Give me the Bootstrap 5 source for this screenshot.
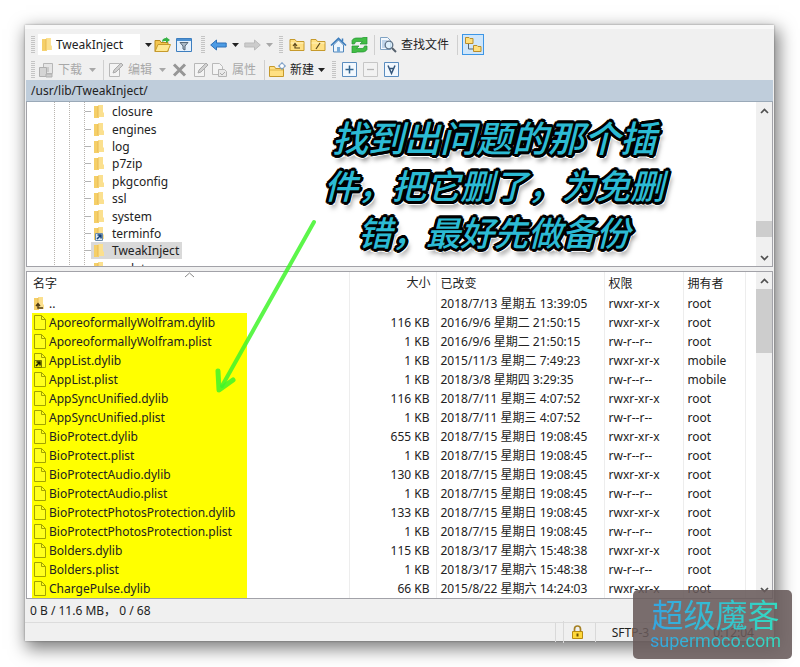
<!DOCTYPE html>
<html lang="zh-CN">
<head>
<meta charset="utf-8">
<meta name="viewport" content="width=device-width, initial-scale=1">
<title>TweakInject</title>
<link rel="stylesheet" href="https://cdn.jsdelivr.net/npm/bootstrap@5.3.0/dist/css/bootstrap.min.css">
<style>
body{font:12px/19px "Noto Sans","Noto Sans CJK SC",sans-serif;color:#222;background:#fff;min-height:100vh}
.page{padding:25px 26px 26px 25px;min-height:100vh}
.app{background:#f0f0f0;box-shadow:3px 6px 16px 2px rgba(0,0,0,.5),0 0 2px rgba(0,0,0,.35)}
.app button{font-size:12px;line-height:18px;color:#222;background:none;border:0;padding:0;white-space:nowrap}
.app button:disabled{color:#a8a8a8}
.bars{padding:5px 0 0 3px;border-top:4px solid #f8f8f8}
.toolrow{height:25px}
.toolrow-top{height:21px}
.tool{width:21px;height:21px;display:inline-flex;align-items:center;justify-content:center}
.drop{width:13px;height:21px;display:inline-flex;align-items:center;justify-content:center}
.grip{width:10px;height:18px;background:repeating-linear-gradient(#c4c4c4 0 1px,transparent 1px 2px) center/4px 100% no-repeat}
.sep{width:9px;height:20px;background:linear-gradient(#cfcfcf,#cfcfcf) center/1px 100% no-repeat}
.combo{width:114px;height:21px;background:linear-gradient(90deg,#fff 102px,transparent 102px)}
.combo select{appearance:none;border:0;background:none;font:12px/19px "Noto Sans",sans-serif;color:#222;padding:0;width:86px}
.app .toggled{width:22px;height:21px;border:1px solid #3c96e6;background:#cfe6fa}
.path{height:22px;background:#bfcddb;border-bottom:1px solid #9aa9b8;padding-left:5px;line-height:21px;margin:0 1px}
.pane{background:#fff;border:1px solid #a2a2a8;margin:0 1px}
.tree{height:165px;border-top:0}
.nodes{height:175px;padding-top:1px;overflow:hidden;
 background:repeating-linear-gradient(#b9b5b0 0 1px,transparent 1px 2px) 27px 0/1px 100% no-repeat,
 repeating-linear-gradient(#b9b5b0 0 1px,transparent 1px 2px) 42px 0/1px 100% no-repeat,
 repeating-linear-gradient(#b9b5b0 0 1px,transparent 1px 2px) 57px 0/1px 100% no-repeat}
.node{flex:1 1 0;min-height:0;padding-left:58px;font-size:12px;line-height:17px}
.node::before{content:"";width:6px;height:1px;background:#b4b4b4}
.node a{color:#222;text-decoration:none;display:flex;align-items:center;height:17px;padding:0 3px 0 3px}
.node a svg{margin-right:8px}
.node a.current{background:#d9d9d9}
.scroller{width:16px;background:#f0f0f0}
.app .scroller button{height:17px;display:flex;align-items:center;justify-content:center}
.thumb{background:#cdcdcd}
.list{height:328px;margin-top:4px}
.files{table-layout:fixed;line-height:19px;width:100%;white-space:nowrap}
.files th,.files td{padding:0 0 0 4px;border-right:1px solid #ededed;overflow:hidden;font-weight:400;height:19px}
.files th{height:22px;line-height:20px;padding-top:1px}
.files th.first-col{padding-left:6px}
.files .size{text-align:right;padding:0 6px 0 0}
.files th.size{padding-right:5px}
.files td:last-child,.files th:last-child{border:0}
.files td:first-child{padding-left:5px}
.files .label{display:flex;align-items:center;width:215px;padding-left:2px;gap:3px}
.files .hit{background:#ff0}
.files td svg{flex:none}
.totals{height:24px;line-height:24px;padding-left:5px;word-break:keep-all;border-bottom:1px solid #dcdcdc}
.session{height:18px}
.cell{border-left:1px solid #d9d9d9}
.caption{top:113px;left:287px;width:414px;color:#2cbbd4;font:italic 500 34px/47px "Noto Sans CJK SC",sans-serif;text-align:center;
 text-shadow:2px 0 #000,-2px 0 #000,0 2px #000,0 -2px #000,2px 2px #000,-2px 2px #000,2px -2px #000,-2px -2px #000,
 3px 0 #000,-3px 0 #000,0 3px #000,0 -3px #000,3px 1px #000,-3px 1px #000,1px 3px #000,1px -3px #000,
 4px 0 #fff,-4px 0 #fff,0 4px #fff,0 -4px #fff,3px 3px #fff,-3px 3px #fff,3px -3px #fff,-3px -3px #fff,3px 6px 5px #777}
.caption .first{font-size:36px}
.pointer{left:210px;top:215px}
.sorted{left:184px;top:272px}
.stamp{right:8px;bottom:8px;width:159px;height:69px;border-radius:5px;background:rgba(104,90,90,.88);text-align:center;padding:5px 0 0 6px}
.stamp span{display:block;background:linear-gradient(90deg,#35a0e4,#34dfbd);background-clip:text;-webkit-background-clip:text;color:transparent}
.stamp .brand{font:400 32px/36px "Noto Sans CJK SC",sans-serif}
.stamp .site{font:18px/19px Roboto,sans-serif}
</style>
<script src="https://cdn.jsdelivr.net/npm/bootstrap@5.3.0/dist/js/bootstrap.bundle.min.js"></script>
</head>
<body>
<svg class="d-none" xmlns="http://www.w3.org/2000/svg">
<symbol id="dir" viewBox="0 0 10 13"><path d="M0 1h5v12H0z" fill="#f5cf68"/><path d="M4 0h5v7l1 1v4H4z" fill="#fbe08f"/><path d="M4 1v11" stroke="#e9b950" fill="none"/></symbol>
<symbol id="doc" viewBox="0 0 12 15"><path d="M.5.5h7l4 4v10H.5z" fill="#ffff3a" fill-opacity=".5" stroke="#a3a300"/><path d="M7.500.5v4h4" fill="none" stroke="#a3a300"/></symbol>
<symbol id="link" viewBox="0 0 8 8"><path d="M.5.5h7v7h-7z" fill="#dceaf6" stroke="#6e8da8"/><path d="M2 6l3.500-3.500M2.500 2H6v3.500" stroke="#123f78" stroke-width="1.500" fill="none"/></symbol>
<symbol id="down" viewBox="0 0 7 4"><path d="M0 0h7L3.500 4z" fill="currentColor"/></symbol>
<symbol id="chev" viewBox="0 0 9 6"><path d="M1 5l3.500-3.500L8 5" fill="none" stroke="#505050" stroke-width="1.700"/></symbol>
<symbol id="fold" viewBox="0 0 16 14"><path d="M1 12.500v-11h5l1.500 2H15v9z" fill="#ffe083" stroke="#c69a2c"/><path d="M1.500 5h13" stroke="#fff3c0"/></symbol>
<symbol id="edit" viewBox="0 0 16 16"><path d="M1.500 1.500h10v13h-10z" fill="#f4f4f4" stroke="#b8b8b8"/><path d="M5 11l1-3 7-7 2 2-7 7z" fill="#d0d0d0" stroke="#aaa"/></symbol>
</svg>
<div class="page position-relative">
<main class="app position-relative">
 <div class="bars">
  <div class="toolrow-top d-flex align-items-center">
   <span class="grip"></span>
   <label class="combo d-flex align-items-center ps-1"><svg width="10" height="13" class="me-1"><use href="#dir"/></svg><select aria-label="目录"><option>TweakInject</option></select><svg class="ms-1" width="7" height="4"><use href="#down"/></svg></label>
   <button class="tool" aria-label="打开目录"><svg width="17" height="16" viewBox="0 0 17 16"><path d="M1 14.500v-11h5l1 2h7v9z" fill="#f4c64f" stroke="#b98a1e"/><path d="M1 14.500l3-7h12.500l-3 7z" fill="#ffe891" stroke="#c69a2c"/><path d="M8 5c0-3 2-4 4-4V0l4 3-4 3V4c-2 0-3 0-4 1z" fill="#35b344"/></svg></button>
   <button class="tool" aria-label="筛选"><svg width="16" height="14" viewBox="0 0 16 14"><path d="M.5.5h15v13H.5z" fill="#e6f1fc" stroke="#3d7ebf"/><path d="M1 1h14v2H1z" fill="#4d91d2"/><path d="M4 4.500h8L9 8v4l-2-1V8z" fill="#abb9c6" stroke="#56697b"/></svg></button>
   <span class="grip ms-1"></span>
   <button class="tool" aria-label="后退"><svg width="17" height="12" viewBox="0 0 17 12"><path d="M.7 6L6.500 1v3h9.700v4H6.500v3z" fill="#4c9be4" stroke="#2f71b8"/></svg></button>
   <button class="drop" aria-label="后退历史"><svg width="7" height="4"><use href="#down"/></svg></button>
   <button class="tool" aria-label="前进" disabled><svg width="17" height="12" viewBox="0 0 17 12"><path d="M16.300 6L10.500 1v3H.8v4h9.700v3z" fill="#ccc" stroke="#bbb"/></svg></button>
   <button class="drop" aria-label="前进历史" disabled><svg width="7" height="4"><use href="#down"/></svg></button>
   <span class="grip"></span>
   <button class="tool" aria-label="上级目录"><svg width="16" height="14" viewBox="0 0 16 14"><use href="#fold"/><path d="M11 10H6V6M4 8l2-2.500L8 8" fill="none" stroke="#5b471b" stroke-width="1.200"/></svg></button>
   <button class="tool" aria-label="根目录"><svg width="16" height="14" viewBox="0 0 16 14"><use href="#fold"/><path d="M6 11l4-6" fill="none" stroke="#5b471b" stroke-width="1.200"/></svg></button>
   <button class="tool" aria-label="主目录"><svg width="17" height="16" viewBox="0 0 17 16"><path d="M3.500 8v7h10V8l-5-5z" fill="#eef6fd" stroke="#4e86bc"/><path d="M1 8.500l7.500-7 7.500 7" fill="none" stroke="#3c7dbd" stroke-width="1.700"/><path d="M7 10h3v5H7z" fill="#75a9d8"/><path d="M12.500 1.500v3" stroke="#3c7dbd" stroke-width="1.500"/></svg></button>
   <button class="tool" aria-label="刷新"><svg width="17" height="16" viewBox="0 0 17 16"><path d="M1 7V3.500C2 1.500 4 1 6 1h5l2-1h3v7H9l2.500-2.500H6C4.500 4.500 4 5.500 3.500 7z" fill="#42bd45" stroke="#239334" stroke-width=".7"/><path d="M16 9v3.500c-1 2-3 2.500-5 2.500H6l-2 1H1V9h7l-2.500 2.500H11c1.500 0 2-1 2.500-2.500z" fill="#42bd45" stroke="#239334" stroke-width=".7"/></svg></button>
   <span class="sep"></span>
   <button class="d-flex align-items-center gap-1"><svg width="18" height="17" viewBox="0 0 18 17"><path d="M1.500 1.500h7l3 3v9h-10z" fill="#f3f8fd" stroke="#7fa2c3"/><path d="M3 5h5M3 7h3M3 9h3M3 11h3" stroke="#8db2d7"/><circle cx="10" cy="9" r="3.800" fill="#d8edfb" fill-opacity=".8" stroke="#5e7186" stroke-width="1.300"/><path d="M13 12l4 4" stroke="#55606c" stroke-width="2"/></svg>查找文件</button>
   <span class="sep ms-1"></span>
   <button class="toggled d-flex align-items-center justify-content-center" aria-label="目录树" aria-pressed="true"><svg width="18" height="17" viewBox="0 0 18 17"><path d="M1.500 1.500H5l1 1h3v5H1.500zM9.500 9.500H13l1 1h3v5H9.500z" fill="#ffdf7c" stroke="#b98d2c"/><path d="M4.500 8v5H9" stroke="#55646f" fill="none"/></svg></button>
  </div>
  <div class="toolrow d-flex align-items-center pt-1">
   <span class="grip"></span>
   <button class="d-flex align-items-center gap-1" disabled><svg width="16" height="16" viewBox="0 0 16 16"><path d="M5.500 1.500h9v10h-9z" fill="#e5e5e5" stroke="#b7b7b7"/><path d="M1.500 5.500h7v9h-7z" fill="#d4d4d4" stroke="#afafaf"/><path d="M10 5v5M8 12h6v3H8z" stroke="#b0b0b0" fill="#ccc"/></svg>下载</button>
   <button class="drop ms-1" aria-label="下载选项" disabled><svg width="7" height="4"><use href="#down"/></svg></button>
   <span class="sep"></span>
   <button class="d-flex align-items-center gap-1" disabled><svg width="16" height="16"><use href="#edit"/></svg>编辑</button>
   <button class="drop ms-1" aria-label="编辑选项" disabled><svg width="7" height="4"><use href="#down"/></svg></button>
   <button class="tool" aria-label="删除" disabled><svg width="15" height="14" viewBox="0 0 15 14"><path d="M2 1.500l11 11M13 1.500l-11 11" stroke="#969696" stroke-width="3"/></svg></button>
   <button class="tool" aria-label="重命名" disabled><svg width="16" height="16"><use href="#edit"/></svg></button>
   <button class="d-flex align-items-center gap-1" disabled><svg width="17" height="16" viewBox="0 0 17 16"><path d="M1.500 1.500h7l3 3v8h-10z" fill="#f4f4f4" stroke="#b9b9b9"/><path d="M7.500 7.500h6l2 2v5h-8z" fill="#e8e8e8" stroke="#b5b5b5"/><path d="M9 11l2 2 3-3" stroke="#aaa" fill="none"/></svg>属性</button>
   <span class="sep ms-1"></span>
   <button class="d-flex align-items-center gap-1"><svg width="17" height="16" viewBox="0 0 17 16"><path d="M.5 14.500v-10h5l1 2h8v8z" fill="#ffe083" stroke="#c69a2c"/><path d="M1 8h13" stroke="#e0b549"/><circle cx="13" cy="4" r="2.500" fill="#fff" stroke="#6d94c2"/><path d="M13 0v1M13 7v1M9 4h1M16 4h1" stroke="#6d94c2"/></svg>新建<svg width="7" height="4"><use href="#down"/></svg></button>
   <span class="grip ms-1"></span>
   <button class="tool" aria-label="选择"><svg width="15" height="15" viewBox="0 0 15 15"><path d="M.5.5h14v14H.5z" fill="#f2f8fe" stroke="#5b8dbf"/><path d="M3.500 7.500h8M7.500 3.500v8" stroke="#33658f" stroke-width="1.500"/></svg></button>
   <button class="tool" aria-label="取消选择" disabled><svg width="15" height="15" viewBox="0 0 15 15"><path d="M.5.5h14v14H.5z" fill="#f2f2f2" stroke="#c6c6c6"/><path d="M4 7.500h7" stroke="#b5b5b5" stroke-width="1.300"/></svg></button>
   <button class="tool" aria-label="全选"><svg width="15" height="15" viewBox="0 0 15 15"><path d="M.5.5h14v14H.5z" fill="#f2f8fe" stroke="#5b8dbf"/><path d="M4 3.500l3.500 8 3.500-8M5 6.500h5" stroke="#33557a" stroke-width="1.500" fill="none"/></svg></button>
  </div>
 </div>
 <div class="path">/usr/lib/TweakInject/</div>
 <section class="pane tree d-flex overflow-hidden" aria-label="目录树">
  <nav class="nodes d-flex flex-column flex-grow-1">
   <div class="node d-flex align-items-center"><a href="#"><svg width="10" height="13"><use href="#dir"/></svg>closure</a></div>
   <div class="node d-flex align-items-center"><a href="#"><svg width="10" height="13"><use href="#dir"/></svg>engines</a></div>
   <div class="node d-flex align-items-center"><a href="#"><svg width="10" height="13"><use href="#dir"/></svg>log</a></div>
   <div class="node d-flex align-items-center"><a href="#"><svg width="10" height="13"><use href="#dir"/></svg>p7zip</a></div>
   <div class="node d-flex align-items-center"><a href="#"><svg width="10" height="13"><use href="#dir"/></svg>pkgconfig</a></div>
   <div class="node d-flex align-items-center"><a href="#"><svg width="10" height="13"><use href="#dir"/></svg>ssl</a></div>
   <div class="node d-flex align-items-center"><a href="#"><svg width="10" height="13"><use href="#dir"/></svg>system</a></div>
   <div class="node d-flex align-items-center"><a href="#"><svg width="10" height="14" viewBox="0 0 10 14"><use href="#dir" width="10" height="13"/><use href="#link" x="1" y="6" width="8" height="8"/></svg>terminfo</a></div>
   <div class="node d-flex align-items-center"><a href="#" class="current"><svg width="10" height="13"><use href="#dir"/></svg>TweakInject</a></div>
   <div class="node d-flex align-items-center"><a href="#"><svg width="10" height="13"><use href="#dir"/></svg>update</a></div>
  </nav>
  <div class="scroller d-flex flex-column">
   <button aria-label="向上滚动"><svg width="9" height="6"><use href="#chev"/></svg></button>
   <div class="flex-grow-1"></div><div class="thumb pt-3"></div><div class="pt-2 mt-1"></div>
   <button aria-label="向下滚动"><svg width="9" height="6" viewBox="0 0 9 6"><path d="M1 1l3.500 3.500L8 1" fill="none" stroke="#505050" stroke-width="1.700"/></svg></button>
  </div>
 </section>
 <section class="pane list d-flex overflow-hidden" aria-label="文件">
  <div class="flex-grow-1 overflow-hidden">
  <table class="files">
   <colgroup><col><col width="87"><col width="168"><col width="79"><col width="62"><col width="11"></colgroup>
   <thead><tr><th class="first-col">名字</th><th class="size">大小</th><th>已改变</th><th>权限</th><th>拥有者</th><th></th></tr></thead>
   <tbody>
   <tr><td><div class="label"><svg width="12" height="14" viewBox="0 0 12 14"><use href="#dir" width="10" height="13"/><path d="M9 11H4V7M2 9l2-2.500L6 9" fill="none" stroke="#503b14" stroke-width="1.400"/></svg>..</div></td><td></td><td>2018/7/13 星期五 13:39:05</td><td>rwxr-xr-x</td><td>root</td><td></td></tr>
   <tr><td><div class="label hit"><svg width="12" height="15"><use href="#doc"/></svg>AporeoformallyWolfram.dylib</div></td><td class="size">116 KB</td><td>2016/9/6 星期二 21:50:15</td><td>rwxr-xr-x</td><td>root</td><td></td></tr>
   <tr><td><div class="label hit"><svg width="12" height="15"><use href="#doc"/></svg>AporeoformallyWolfram.plist</div></td><td class="size">1 KB</td><td>2016/9/6 星期二 21:50:15</td><td>rw-r--r--</td><td>root</td><td></td></tr>
   <tr><td><div class="label hit"><svg width="12" height="15" viewBox="0 0 12 15"><use href="#doc" width="12" height="15"/><path d="M.5 7.500h7v7h-7z" fill="#e6e600" stroke="#777700"/><path d="M2 13l3.500-3.500M2.500 9H6v3.500" stroke="#1c1c00" stroke-width="1.500" fill="none"/></svg>AppList.dylib</div></td><td class="size">1 KB</td><td>2015/11/3 星期二 7:49:23</td><td>rwxr-xr-x</td><td>mobile</td><td></td></tr>
   <tr><td><div class="label hit"><svg width="12" height="15"><use href="#doc"/></svg>AppList.plist</div></td><td class="size">1 KB</td><td>2018/3/8 星期四 3:29:35</td><td>rw-r--r--</td><td>mobile</td><td></td></tr>
   <tr><td><div class="label hit"><svg width="12" height="15"><use href="#doc"/></svg>AppSyncUnified.dylib</div></td><td class="size">116 KB</td><td>2018/7/11 星期三 4:07:52</td><td>rwxr-xr-x</td><td>root</td><td></td></tr>
   <tr><td><div class="label hit"><svg width="12" height="15"><use href="#doc"/></svg>AppSyncUnified.plist</div></td><td class="size">1 KB</td><td>2018/7/11 星期三 4:07:52</td><td>rw-r--r--</td><td>root</td><td></td></tr>
   <tr><td><div class="label hit"><svg width="12" height="15"><use href="#doc"/></svg>BioProtect.dylib</div></td><td class="size">655 KB</td><td>2018/7/15 星期日 19:08:45</td><td>rwxr-xr-x</td><td>root</td><td></td></tr>
   <tr><td><div class="label hit"><svg width="12" height="15"><use href="#doc"/></svg>BioProtect.plist</div></td><td class="size">1 KB</td><td>2018/7/15 星期日 19:08:45</td><td>rw-r--r--</td><td>root</td><td></td></tr>
   <tr><td><div class="label hit"><svg width="12" height="15"><use href="#doc"/></svg>BioProtectAudio.dylib</div></td><td class="size">130 KB</td><td>2018/7/15 星期日 19:08:45</td><td>rwxr-xr-x</td><td>root</td><td></td></tr>
   <tr><td><div class="label hit"><svg width="12" height="15"><use href="#doc"/></svg>BioProtectAudio.plist</div></td><td class="size">1 KB</td><td>2018/7/15 星期日 19:08:45</td><td>rw-r--r--</td><td>root</td><td></td></tr>
   <tr><td><div class="label hit"><svg width="12" height="15"><use href="#doc"/></svg>BioProtectPhotosProtection.dylib</div></td><td class="size">133 KB</td><td>2018/7/15 星期日 19:08:45</td><td>rwxr-xr-x</td><td>root</td><td></td></tr>
   <tr><td><div class="label hit"><svg width="12" height="15"><use href="#doc"/></svg>BioProtectPhotosProtection.plist</div></td><td class="size">1 KB</td><td>2018/7/15 星期日 19:08:45</td><td>rw-r--r--</td><td>root</td><td></td></tr>
   <tr><td><div class="label hit"><svg width="12" height="15"><use href="#doc"/></svg>Bolders.dylib</div></td><td class="size">115 KB</td><td>2018/3/17 星期六 15:48:38</td><td>rwxr-xr-x</td><td>root</td><td></td></tr>
   <tr><td><div class="label hit"><svg width="12" height="15"><use href="#doc"/></svg>Bolders.plist</div></td><td class="size">1 KB</td><td>2018/3/17 星期六 15:48:38</td><td>rw-r--r--</td><td>root</td><td></td></tr>
   <tr><td><div class="label hit"><svg width="12" height="15"><use href="#doc"/></svg>ChargePulse.dylib</div></td><td class="size">66 KB</td><td>2015/8/22 星期六 14:24:03</td><td>rwxr-xr-x</td><td>root</td><td></td></tr>
   </tbody>
  </table>
  </div>
  <div class="scroller d-flex flex-column flex-shrink-0">
   <button aria-label="向上滚动"><svg width="9" height="6"><use href="#chev"/></svg></button>
   <div class="thumb pt-3 pb-5"></div><div class="flex-grow-1"></div>
   <button aria-label="向下滚动"><svg width="9" height="6" viewBox="0 0 9 6"><path d="M1 1l3.500 3.500L8 1" fill="none" stroke="#505050" stroke-width="1.700"/></svg></button>
  </div>
 </section>
 <div class="totals">0 B / 11.6 MB， 0 / 68</div>
 <div class="session d-flex align-items-center justify-content-end">
  <span class="cell ps-1 ms-auto">&nbsp;</span>
  <span class="cell px-2 d-flex py-1"><svg width="11" height="14" viewBox="0 0 11 14"><path d="M2.500 7V4a3 3 0 016 0v3" fill="none" stroke="#a58124" stroke-width="1.700"/><path d="M.5 6.500h10v7H.5z" fill="#ffd83a" stroke="#b88b12"/><path d="M5.500 8.500v3" stroke="#6d5200" stroke-width="2"/></svg></span>
  <span class="cell ms-1 ps-3 pe-5 me-3">SFTP-3</span>
  <span class="pe-3 me-1">0:12:04</span>
 </div>
</main>
<svg class="pointer position-absolute" width="112" height="185" viewBox="0 0 112 185" aria-hidden="true"><g stroke="#3ff52a" stroke-opacity=".85" stroke-linecap="round" fill="none"><path d="M104 7L12 171" stroke-width="4"/><path d="M8 156l1 19 14-10" stroke-width="5" stroke-linejoin="round"/></g></svg>
<svg class="sorted position-absolute" width="11" height="6" viewBox="0 0 11 6" aria-hidden="true"><path d="M1 5l4.500-4L10 5" fill="none" stroke="#888"/></svg>
<div class="caption position-absolute"><span class="first">找到出问题的那个插</span><br>件，把它删了，为免删<br>错，最好先做备份</div>
<div class="stamp position-absolute"><span class="brand">超级魔客</span><span class="site">supermoco.com</span></div>
</div>
</body>
</html>
